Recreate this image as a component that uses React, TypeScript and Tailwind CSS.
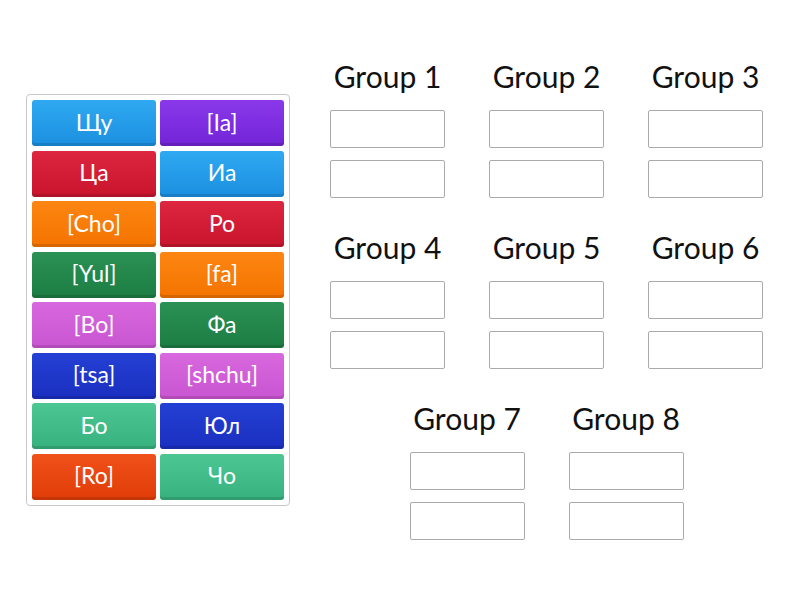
const TILES = [
  { text: "Щу", top: "#2fa9f1", bottom: "#1b8fe0" },
  { text: "[Ia]", top: "#8a38ea", bottom: "#7124d6" },
  { text: "Ца", top: "#dd2640", bottom: "#c8142c" },
  { text: "Иа", top: "#2fa9f1", bottom: "#1b8fe0" },
  { text: "[Cho]", top: "#fd8612", bottom: "#f47300" },
  { text: "Ро", top: "#dd2640", bottom: "#c8142c" },
  { text: "[Yul]", top: "#2b9155", bottom: "#1c7d43" },
  { text: "[fa]", top: "#fd8612", bottom: "#f47300" },
  { text: "[Bo]", top: "#d868de", bottom: "#c955d1" },
  { text: "Фа", top: "#2b9155", bottom: "#1c7d43" },
  { text: "[tsa]", top: "#2440d4", bottom: "#1a2fc0" },
  { text: "[shchu]", top: "#d868de", bottom: "#c955d1" },
  { text: "Бо", top: "#4cc693", bottom: "#37b27e" },
  { text: "Юл", top: "#2440d4", bottom: "#1a2fc0" },
  { text: "[Ro]", top: "#f0501a", bottom: "#e03d08" },
  { text: "Чо", top: "#4cc693", bottom: "#37b27e" },
];

const ROWS = [
  ["Group 1", "Group 2", "Group 3"],
  ["Group 4", "Group 5", "Group 6"],
  ["Group 7", "Group 8"],
];

function Tile({ text, top, bottom }: { text: string; top: string; bottom: string }) {
  return (
    <div
      className="flex h-[46px] items-center justify-center rounded-[3px] pb-[3px] text-[23px] text-white shadow-[inset_0_-3px_0_rgba(0,0,0,0.12)]"
      style={{ background: `linear-gradient(${top}, ${bottom})` }}
    >
      {text}
    </div>
  );
}

function Group({ title }: { title: string }) {
  return (
    <div className="flex w-[115px] flex-col items-center">
      <div className="h-[36px] whitespace-nowrap text-[30px] leading-[36px] text-[#111]">{title}</div>
      <div className="mt-[16px] h-[38px] w-full rounded-[2px] border border-[#aaa] bg-white" />
      <div className="mt-[12px] h-[38px] w-full rounded-[2px] border border-[#aaa] bg-white" />
    </div>
  );
}

export default function App() {
  return (
    <div className="flex h-[600px] w-[800px] items-center bg-white pl-[26px] font-['Lato',sans-serif]">
      <div className="grid w-[264px] grid-cols-2 gap-x-[4px] gap-y-[4.5px] rounded-[4px] border border-[#c8c8c8] p-[5px]">
        {TILES.map((t, i) => (
          <Tile key={i} {...t} />
        ))}
      </div>

      <div className="mb-[2px] ml-[40px] flex w-[433px] flex-col items-center gap-[31px]">
        {ROWS.map((row, i) => (
          <div key={i} className="flex gap-[44px]">
            {row.map((g) => (
              <Group key={g} title={g} />
            ))}
          </div>
        ))}
      </div>
    </div>
  );
}
